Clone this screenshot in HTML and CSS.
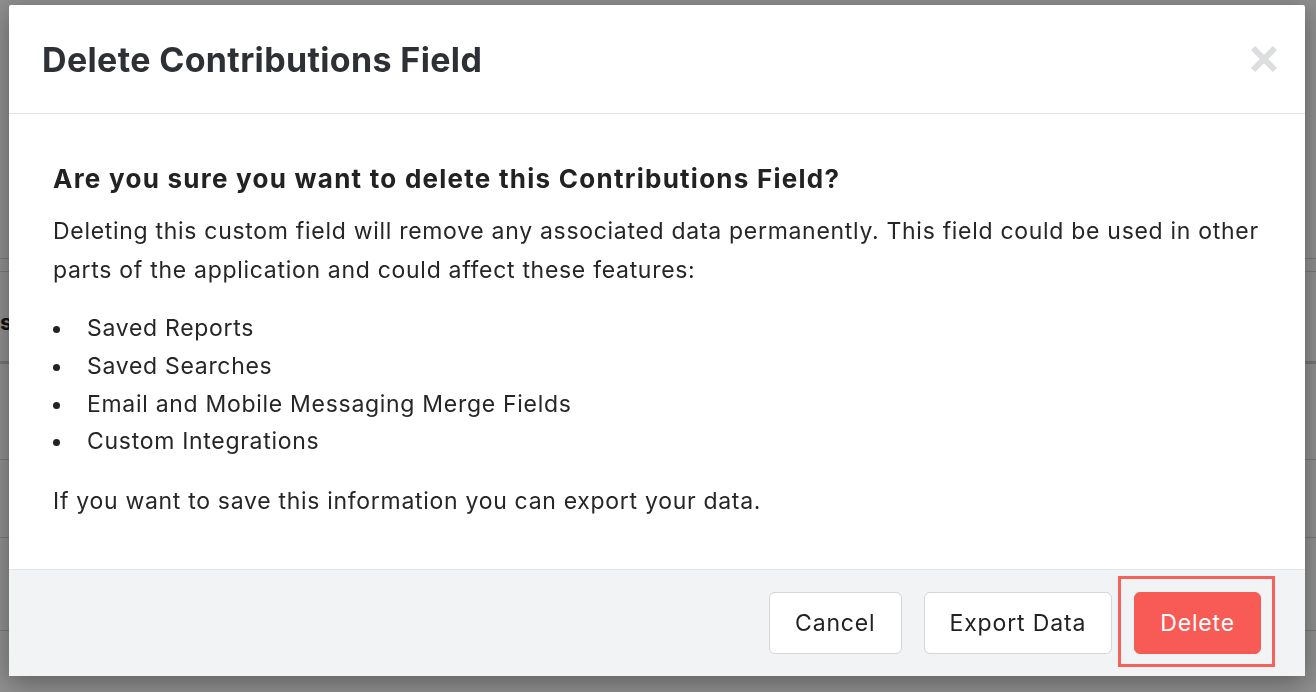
FILE: index.html
```html
<!DOCTYPE html>
<html lang="en">
<head>
	<meta charset="UTF-8">
	<title>Delete Contributions Field</title>
	<link rel="stylesheet" href="styles.css">
</head>
<body>
	<div class="page">
		<div class="row row1"></div>
		<div class="row row2"></div>
		<div class="row row3"><b>s</b></div>
		<div class="row row4"></div>
		<div class="row row5"></div>
		<div class="row row6"></div>
		<div class="row row7"></div>
	</div>
	<div class="overlay"></div>

	<div class="modal">
		<div class="modal-head">
			<h2>Delete Contributions Field</h2>
			<a href="javascript:;" class="close" aria-label="Close">
				<svg width="28" height="28" viewBox="0 0 28 28"><path d="M3 3 L25 25 M25 3 L3 25" stroke="#dcdddf" stroke-width="6" fill="none"/></svg>
			</a>
		</div>
		<div class="modal-body">
			<h3>Are you sure you want to delete this Contributions Field?</h3>
			<p>Deleting this custom field will remove any associated data permanently. This field could be used in other parts of the application and could affect these features:</p>
			<ul>
				<li>Saved Reports</li>
				<li>Saved Searches</li>
				<li>Email and Mobile Messaging Merge Fields</li>
				<li>Custom Integrations</li>
			</ul>
			<p>If you want to save this information you can export your data.</p>
		</div>
		<div class="modal-foot">
			<button class="btn">Cancel</button>
			<button class="btn">Export Data</button>
			<button class="btn btn-danger">Delete</button>
		</div>
	</div>
</body>
</html>
```

FILE: styles.css
```css
* { padding: 0; margin: 0; box-sizing: border-box; }
li { list-style: none; }
body { background: #fff; font-family: Inter, "Liberation Sans", sans-serif; overflow: hidden; height: 692px; }

.page { width: 1316px; }
.page .row { border-bottom: 1px solid #d8d8d8; }
.page .row1 { height: 259px; }
.page .row2 { height: 13px; }
.page .row3 { height: 92px; border-bottom: 3px solid #d0d0d0; font-size: 22px; line-height: 100px; color: #222; }
.page .row4 { height: 96px; }
.page .row5 { height: 78px; }
.page .row6 { height: 93px; }
.page .row7 { height: 60px; border: none; }

.overlay { position: fixed; top: 0; left: 0; right: 0; bottom: 0; background: rgba(0,0,0,0.44); }

.modal { position: absolute; top: 5px; left: 9px; width: 1296px; height: 671px; background: #fff; border-radius: 2px; display: flex; flex-direction: column;
	box-shadow: 0 6px 24px rgba(0,0,0,0.35); }

.modal-head { height: 109px; border-bottom: 1px solid #e3e4e6; display: flex; align-items: center; justify-content: space-between; padding: 0 27px 0 33px; }
.modal-head h2 { font-size: 34px; font-weight: 700; color: #2d3035; letter-spacing: 0.35px; }
.modal-head .close { display: block; width: 28px; height: 28px; }
.modal-head .close svg { display: block; }

.modal-body { flex: 1; padding: 48px 44px 0; color: #262626; }
.modal-body h3 { font-size: 26px; font-weight: 700; line-height: 34px; color: #222; letter-spacing: 1.25px; margin-bottom: 16px; }
.modal-body p { font-size: 23px; line-height: 39px; letter-spacing: 0.7px; }
.modal-body ul { margin: 20px 0 21px; }
.modal-body li { font-size: 23px; line-height: 37.8px; letter-spacing: 0.7px; padding-left: 34px; position: relative; }
.modal-body li:before { content: ""; position: absolute; left: 0; top: 16px; width: 7px; height: 7px; border-radius: 50%; background: #222; }

.modal-foot { height: 107px; background: #f2f3f5; border-top: 1px solid #e1e3e6; display: flex; align-items: center; justify-content: flex-end; gap: 22px; padding: 0 44px 0 0; }
.btn { height: 62px; padding: 0 25px; font-family: Inter, "Liberation Sans", sans-serif; font-size: 23px; letter-spacing: 0.85px; color: #222; background: #fff; border: 1px solid #d3d6da; border-radius: 6px; }
.btn-danger { background: #f85a55; border-color: #f85a55; color: #fff; position: relative; }
.btn-danger:after { content: ""; position: absolute; top: -17px; left: -17px; right: -15px; bottom: -14px; border: 3px solid #f3625b; }
```
